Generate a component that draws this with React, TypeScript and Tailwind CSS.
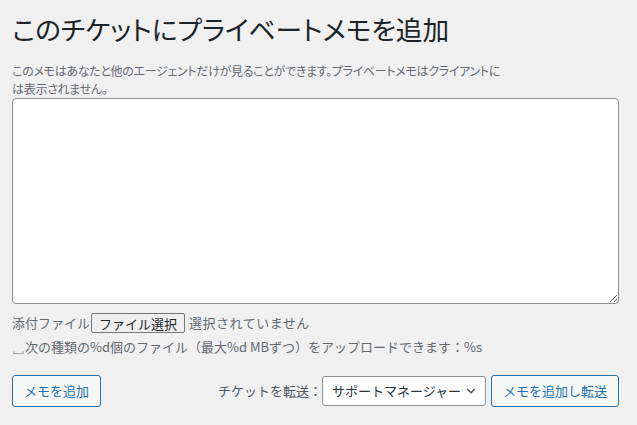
import { ChevronDown } from "lucide-react";

export default function App() {
  const jp = "[font-family:'Noto_Sans_CJK_JP','Noto_Sans',sans-serif]";
  const palt = "[font-feature-settings:'palt']";

  return (
    <div className={`min-h-screen w-[637px] h-[425px] bg-[#f0f0f1] pl-3 pr-[18px] pt-[9px] ${jp}`}>
      <h1 className={`text-[26.7px] leading-[40px] text-[#1d2327] font-normal ${palt}`}>
        このチケットにプライベートメモを追加
      </h1>
      <p className={`mt-[13px] text-[12px] tracking-[-0.3px] leading-[18px] text-[#646970] ${palt}`}>
        このメモはあなたと他のエージェントだけが見ることができます。プライベートメモはクライアントに
        <br />
        は表示されません。
      </p>

      <textarea className="block w-full h-[206px] bg-white border border-[#8c8f94] rounded-[4px] resize-y focus:outline-none" />

      <div className="mt-[9px] flex items-center text-[13px] text-[#646970]">
        <span>添付ファイル</span>
        <button className="ml-[1px] h-[20px] w-[94px] bg-[#efefef] border border-[#767676] rounded-[2px] text-[13px] leading-none text-[#1d2327]">
          ファイル選択
        </button>
        <span className="ml-[4px] tracking-[0.5px]">選択されていません</span>
      </div>
      <p className="mt-[5px] text-[13px] leading-[18px] text-[#646970]">
        ␣次の種類の%d個のファイル（最大%d MBずつ）をアップロードできます：%s
      </p>

      <div className="mt-[19px] flex items-center">
        <button className="h-[32px] px-[11px] bg-[#f6f7f7] border border-[#2271b1] rounded-[3px] text-[13px] text-[#2271b1]">
          メモを追加
        </button>
        <div className="ml-auto flex items-center">
          <span className="text-[13px] text-[#50575e]">チケットを転送：</span>
          <div className="relative w-[164px] h-[30px] bg-white border border-[#8c8f94] rounded-[3px] flex items-center pl-[9px] text-[13px] text-[#2c3338]">
            サポートマネージャー
            <ChevronDown className="absolute right-[7px] top-[7px] w-[14px] h-[14px] text-[#50575e]" strokeWidth={2.5} />
          </div>
          <button className="ml-[5px] h-[32px] px-[11px] bg-[#f6f7f7] border border-[#2271b1] rounded-[3px] text-[13px] text-[#2271b1]">
            メモを追加し転送
          </button>
        </div>
      </div>
    </div>
  );
}
